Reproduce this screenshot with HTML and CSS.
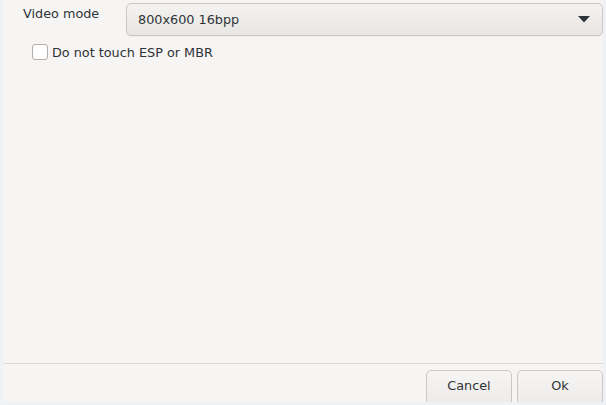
FILE: index.html
```html
<!DOCTYPE html>
<html>
<head>
<meta charset="utf-8">
<link rel="stylesheet" href="styles.css">
</head>
<body>
<div class="window">
  <div class="content">
    <div class="row">
      <div class="label">Video mode</div>
      <div class="combo">
        <span class="combo-text">800x600 16bpp</span>
        <svg class="arrow" width="12" height="7" viewBox="0 0 12 7"><path d="M0 0 H12 L6 6.5 Z" fill="#2e3436"/></svg>
      </div>
    </div>
    <label class="check">
      <span class="box"></span>
      <span>Do not touch ESP or MBR</span>
    </label>
  </div>
  <div class="actions">
    <button class="btn">Cancel</button>
    <button class="btn">Ok</button>
  </div>
</div>
</body>
</html>
```
FILE: styles.css
```css
html, body {
  margin: 0;
  padding: 0;
  background: #eef1f6;
  width: 606px;
  height: 405px;
  overflow: hidden;
}
body {
  padding: 0 3px 3px 3px;
  box-sizing: border-box;
  font-family: "DejaVu Sans", sans-serif;
  font-size: 12.8px;
  color: #2e3436;
}
.window {
  background: #f6f5f4;
  height: 402px;
  display: flex;
  flex-direction: column;
}
.content {
  flex: 1;
  padding: 3px 0 0 0;
}
.row {
  display: flex;
  align-items: flex-start;
}
.label {
  width: 123px;
  padding: 3px 0 0 20px;
  box-sizing: border-box;
  line-height: 15px;
}
.combo {
  flex: 1;
  height: 33px;
  box-sizing: border-box;
  border: 1px solid #cdc7c2;
  border-radius: 5px;
  background: linear-gradient(#f4f3f1, #e8e6e3);
  display: flex;
  align-items: center;
  justify-content: space-between;
  padding: 0 12px 0 11px;
  box-shadow: 0 1px 0 rgba(0,0,0,0.04);
}
.combo-text {
  line-height: 15px;
}
.arrow {
  display: block;
}
.check {
  display: flex;
  align-items: center;
  gap: 4px;
  margin: 8px 0 0 29px;
  line-height: 15px;
}
.box {
  width: 14px;
  height: 14px;
  border: 1px solid #b4aea8;
  border-radius: 3px;
  background: #fff;
}
.actions {
  border-top: 1px solid #dcdad5;
  padding: 6px 0 0 0;
  height: 39px;
  box-sizing: border-box;
  display: flex;
  justify-content: flex-end;
  gap: 5px;
  overflow: hidden;
}
.btn {
  flex: none;
  width: 86px;
  height: 36px;
  font-family: "DejaVu Sans", sans-serif;
  font-size: 12.8px;
  color: #2e3436;
  border: 1px solid #cdc7c2;
  border-radius: 5px;
  background: linear-gradient(#f6f5f4, #edebe9);
  padding: 0 0 6px 0;
}
```
